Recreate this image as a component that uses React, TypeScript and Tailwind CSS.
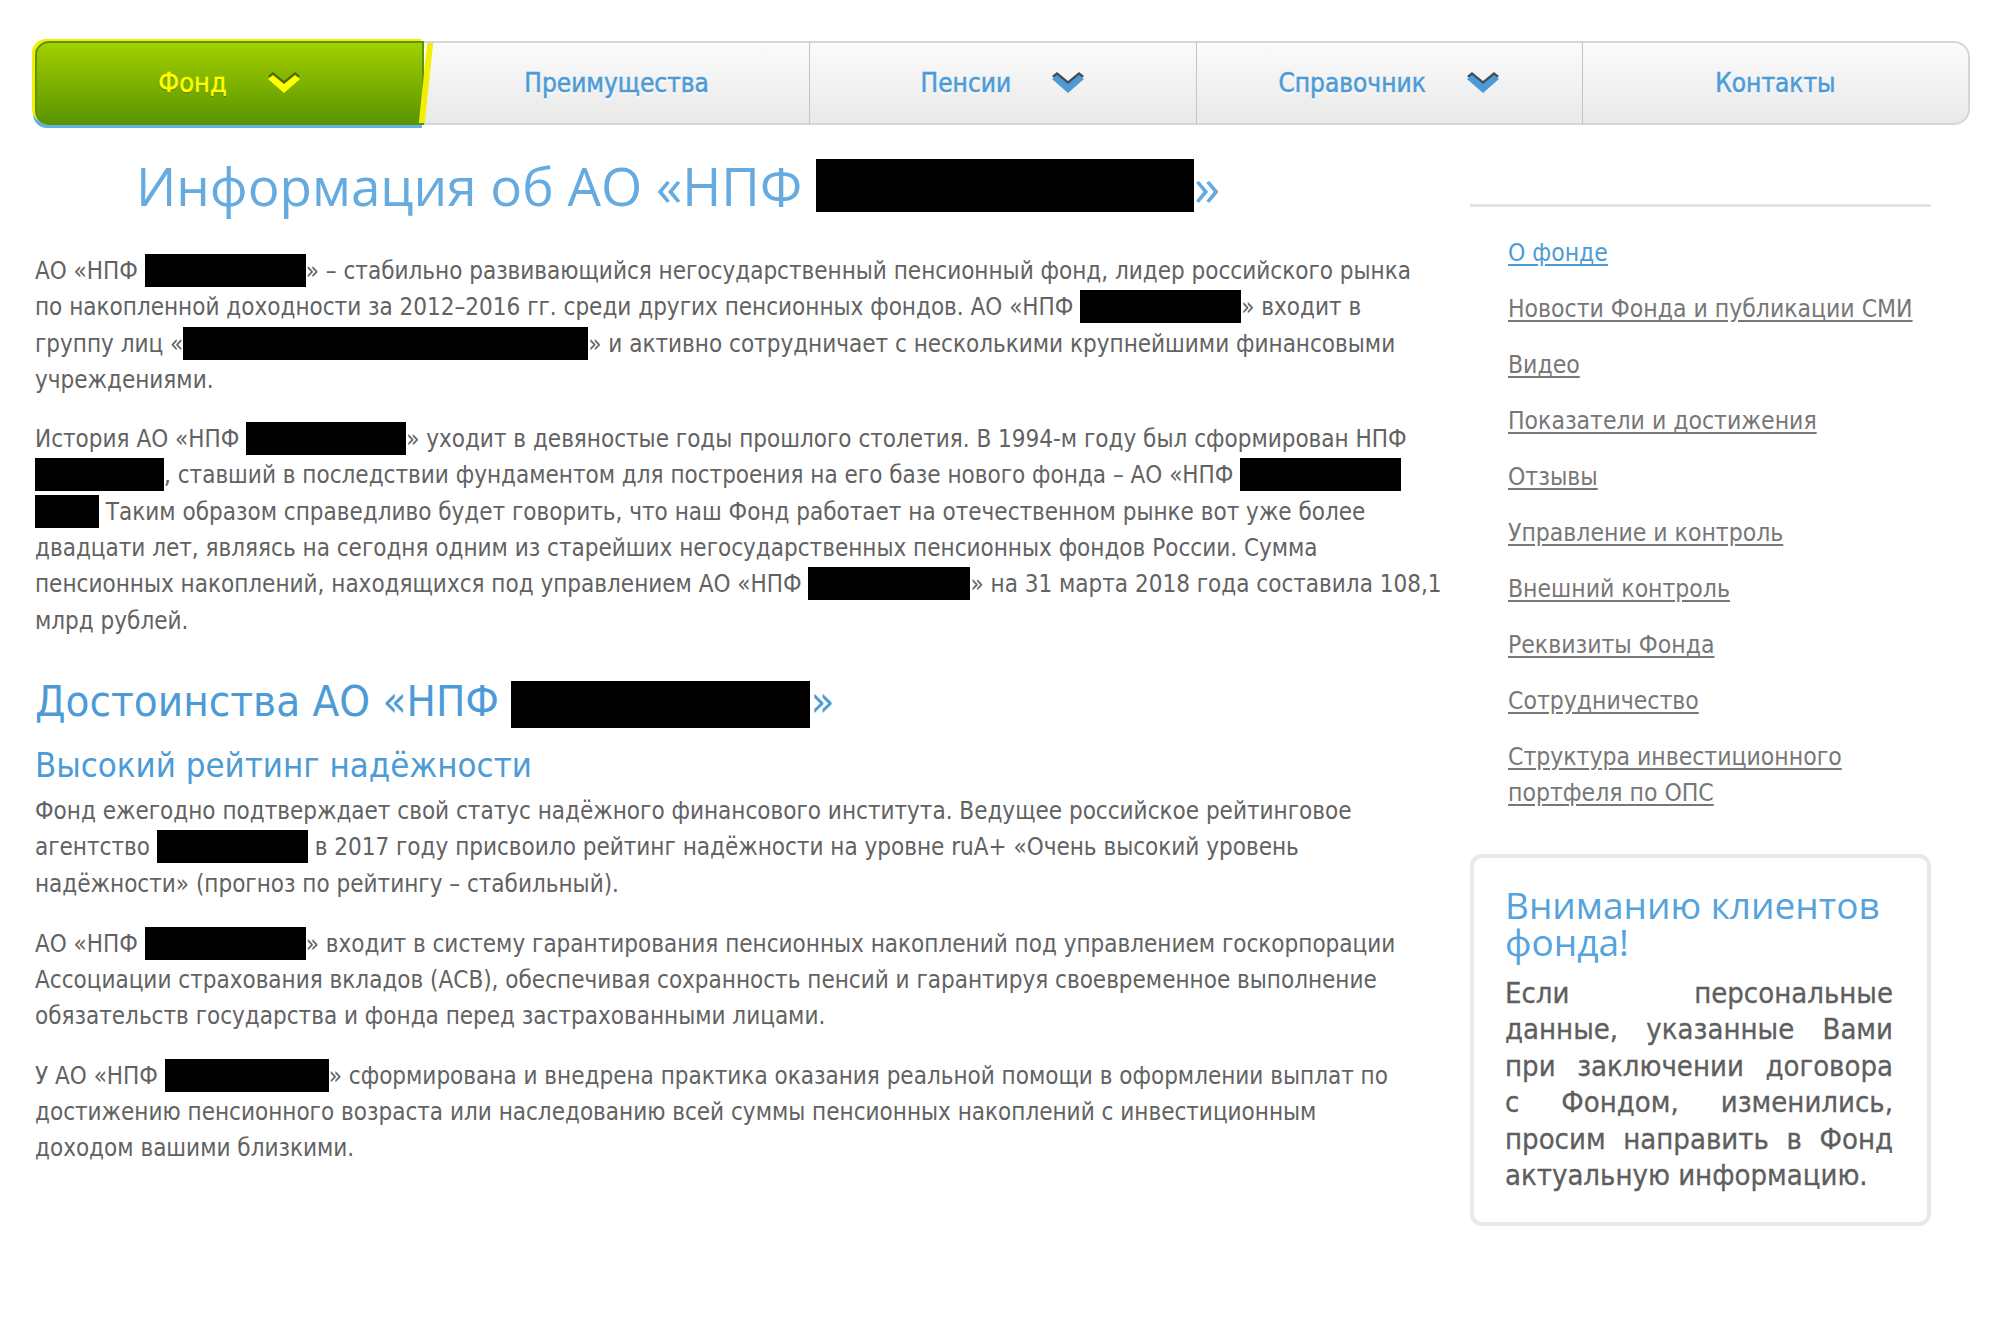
import React from "react";

const cond = "font-['DejaVu_Sans_Condensed','DejaVu_Sans',sans-serif] font-stretch-condensed";
const wide = "font-['Open_Sans','DejaVu_Sans',sans-serif]";

function Box({ w, h = 33, a = "align-[-8px]" }: { w: number; h?: number; a?: string }) {
  return <span className={`inline-block bg-black ${a}`} style={{ width: w, height: h }} />;
}

function Chevron({ color, shade }: { color: string; shade: string }) {
  return (
    <svg width="34" height="24" viewBox="0 0 34 24">
      <path d="M1 5 L6 1 L17 10 L28 1 L33 5 L17 19 Z" fill={shade} />
      <path d="M1 8 L6 4 L17 13 L28 4 L33 8 L17 22 Z" fill={color} />
    </svg>
  );
}

function Nav() {
  const tabs = [
    { label: "Преимущества", arrow: false },
    { label: "Пенсии", arrow: true },
    { label: "Справочник", arrow: true },
    { label: "Контакты", arrow: false },
  ];
  return (
    <div className="ml-[35px] mt-[41px] flex h-[84px] w-[1935px]">
      <div className="relative flex w-[389px] items-center justify-center gap-[40px] rounded-l-[14px] border-2 border-[#5c9400] bg-gradient-to-b from-[#a3d000] to-[#5a9500] shadow-[-3px_-2px_0_#f2f000,-2px_3px_0_#62aee6]">
        <span className={`${cond} text-[27px] text-[#ffff00] [-webkit-text-stroke:0.5px_#ffff00] [text-shadow:0_1px_1px_#3d5e00]`}>Фонд</span>
        <Chevron color="#ffff00" shade="#4a6a00" />
        <span className="absolute right-[-7px] top-0 h-full w-[6px] skew-x-[-6deg] bg-[#f2f000]" />
      </div>
      {tabs.map((t, i) => (
        <div
          key={t.label}
          className={`flex flex-1 items-center justify-center gap-[40px] border-y-2 border-[#d6d6d6] bg-gradient-to-b from-[#fbfbfb] to-[#e9e9e9] ${
            i > 0 ? "border-l border-l-[#c4c4c4]" : ""
          } ${i === tabs.length - 1 ? "rounded-r-[16px] border-r-2" : ""}`}
        >
          <span className={`${cond} text-[26px] text-[#4d9bd6] [-webkit-text-stroke:0.5px_#4d9bd6] [text-shadow:0_2px_0_#ffffff]`}>
            {t.label}
          </span>
          {t.arrow && <Chevron color="#4d9bd6" shade="#444c55" />}
        </div>
      ))}
    </div>
  );
}

const para = `${cond} text-[24px] leading-[36.3px] text-[#626262] whitespace-nowrap`;

function Main() {
  return (
    <div className="ml-[35px] w-[1403px]">
      <h1 className={`${wide} ml-[101px] mt-[31px] text-[53px] leading-[60px] text-[#66abdf]`}>
        Информация об АО «НПФ <Box w={378} h={53} a="align-[-6px]" />»
      </h1>

      <div className={`${para} mt-[37px]`}>
        <div>АО «НПФ <Box w={161} />» – стабильно развивающийся негосударственный пенсионный фонд, лидер российского рынка</div>
        <div>по накопленной доходности за 2012–2016 гг. среди других пенсионных фондов. АО «НПФ <Box w={161} />» входит в</div>
        <div>группу лиц «<Box w={405} />» и активно сотрудничает с несколькими крупнейшими финансовыми</div>
        <div>учреждениями.</div>
      </div>

      <div className={`${para} mt-[23px]`}>
        <div>История АО «НПФ <Box w={160} />» уходит в девяностые годы прошлого столетия. В 1994-м году был сформирован НПФ</div>
        <div><Box w={129} />, ставший в последствии фундаментом для построения на его базе нового фонда – АО «НПФ <Box w={161} /></div>
        <div><Box w={64} /> Таким образом справедливо будет говорить, что наш Фонд работает на отечественном рынке вот уже более</div>
        <div>двадцати лет, являясь на сегодня одним из старейших негосударственных пенсионных фондов России. Сумма</div>
        <div>пенсионных накоплений, находящихся под управлением АО «НПФ <Box w={162} />» на 31 марта 2018 года составила 108,1</div>
        <div>млрд рублей.</div>
      </div>

      <h2 className={`${cond} mt-[36px] text-[43.5px] leading-[52px] text-[#4d9bd6]`}>
        Достоинства АО «НПФ <Box w={299} h={47} a="align-[-12px]" />»
      </h2>
      <h3 className={`${cond} mt-[16px] text-[34.5px] leading-[42px] text-[#4d9bd6]`}>Высокий рейтинг надёжности</h3>

      <div className={`${para} mt-[7px]`}>
        <div>Фонд ежегодно подтверждает свой статус надёжного финансового института. Ведущее российское рейтинговое</div>
        <div>агентство <Box w={151} /> в 2017 году присвоило рейтинг надёжности на уровне ruA+ «Очень высокий уровень</div>
        <div>надёжности» (прогноз по рейтингу – стабильный).</div>
      </div>

      <div className={`${para} mt-[24px]`}>
        <div>АО «НПФ <Box w={161} />» входит в систему гарантирования пенсионных накоплений под управлением госкорпорации</div>
        <div>Ассоциации страхования вкладов (АСВ), обеспечивая сохранность пенсий и гарантируя своевременное выполнение</div>
        <div>обязательств государства и фонда перед застрахованными лицами.</div>
      </div>

      <div className={`${para} mt-[23px]`}>
        <div>У АО «НПФ <Box w={164} />» сформирована и внедрена практика оказания реальной помощи в оформлении выплат по</div>
        <div>достижению пенсионного возраста или наследованию всей суммы пенсионных накоплений с инвестиционным</div>
        <div>доходом вашими близкими.</div>
      </div>
    </div>
  );
}

function Sidebar() {
  const links = [
    "Новости Фонда и публикации СМИ",
    "Видео",
    "Показатели и достижения",
    "Отзывы",
    "Управление и контроль",
    "Внешний контроль",
    "Реквизиты Фонда",
    "Сотрудничество",
  ];
  const notice = [
    "Если персональные",
    "данные, указанные Вами",
    "при заключении договора",
    "с Фондом, изменились,",
    "просим направить в Фонд",
  ];
  return (
    <div className="ml-auto mr-[69px] w-[461px] pt-[79px]">
      <div className="h-[3px] bg-[#e2e2e2]" />
      <div className={`${cond} flex flex-col gap-[20px] pl-[38px] pt-[28px] text-[24.5px] leading-[36px]`}>
        <a className="text-[#4d9bd6] underline underline-offset-[3px]">О фонде</a>
        {links.map((l) => (
          <a key={l} className="text-[#777777] underline underline-offset-[3px]">
            {l}
          </a>
        ))}
        <a className="text-[#777777] underline underline-offset-[3px]">
          Структура инвестиционного
          <br />
          портфеля по ОПС
        </a>
      </div>

      <div className="mt-[43px] h-[372px] rounded-[12px] border-4 border-[#e8e8e8] pl-[31px] pr-[34px] pt-[28px]">
        <div className={`${wide} text-[37px] leading-[37px] text-[#55a3dc]`}>
          Вниманию клиентов
          <br />
          фонда!
        </div>
        <div className={`${cond} mt-[15px] text-[29px] leading-[36.4px] text-[#5e5e5e] [-webkit-text-stroke:0.3px_#5e5e5e]`}>
          {notice.map((l) => (
            <div key={l} className="text-justify [text-align-last:justify]">
              {l}
            </div>
          ))}
          <div>актуальную информацию.</div>
        </div>
      </div>
    </div>
  );
}

export default function App() {
  return (
    <div className="h-[1320px] w-[2000px] overflow-hidden bg-white">
      <Nav />
      <div className="flex">
        <Main />
        <Sidebar />
      </div>
    </div>
  );
}
